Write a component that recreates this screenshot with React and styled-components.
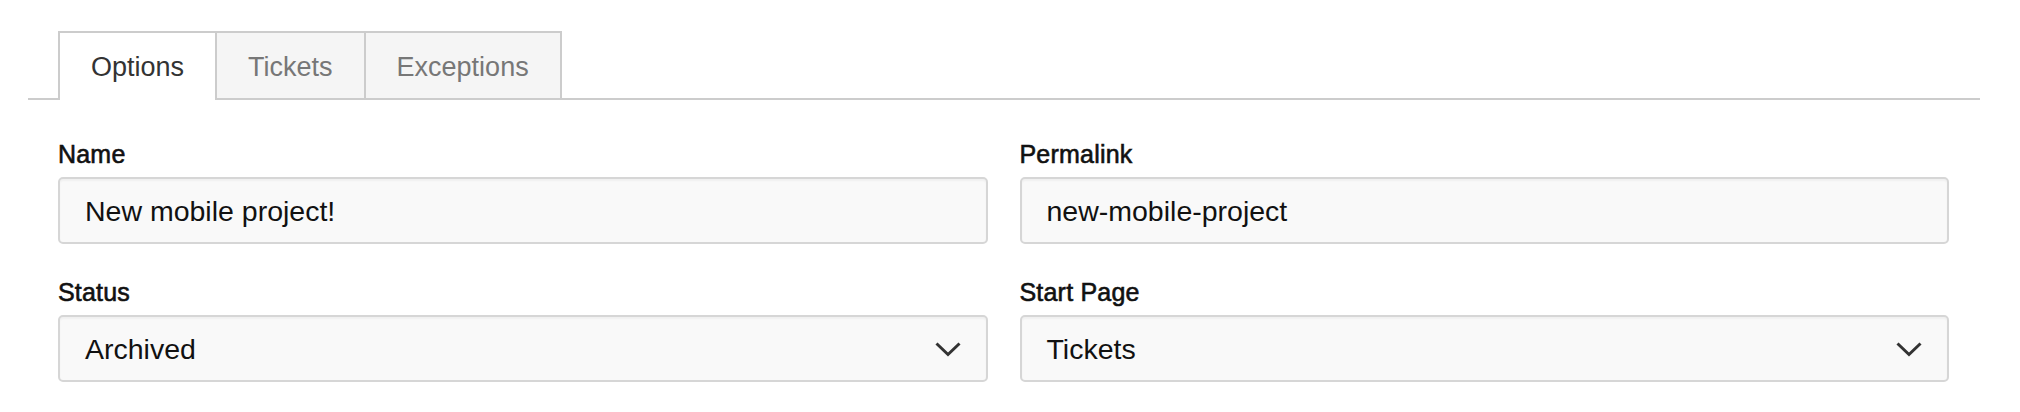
import React from "react";
import styled, { createGlobalStyle } from "styled-components";

const Global = createGlobalStyle`
  html, body {
    margin: 0;
    padding: 0;
    background: #ffffff;
    font-family: "Liberation Sans", Arial, Helvetica, sans-serif;
  }
`;

const Page = styled.div`
  width: 1952px;
  padding: 31px 0 0 28px;
`;

const TabList = styled.div`
  display: flex;
  align-items: flex-end;
  padding-left: 30px;
  border-bottom: 2px solid #cccccc;
  height: 67px;
`;

const Tab = styled.div`
  box-sizing: border-box;
  display: flex;
  align-items: center;
  height: ${(p) => (p.$active ? "69px" : "67px")};
  margin-bottom: ${(p) => (p.$active ? "-2px" : "0")};
  padding: ${(p) => (p.$active ? "4px 31px 2px" : "4px 31px 0")};
  margin-right: -2px;
  border: 2px solid #cccccc;
  border-bottom: 0;
  background: ${(p) => (p.$active ? "#ffffff" : "#f5f5f5")};
  color: ${(p) => (p.$active ? "#333333" : "#777777")};
  font-size: 27px;
  position: relative;
  z-index: ${(p) => (p.$active ? 1 : 0)};
`;

const Form = styled.div`
  display: grid;
  grid-template-columns: 1fr 1fr;
  column-gap: 32px;
  row-gap: 34px;
  padding: 40px 31px 0 30px;
`;

const Field = styled.div`
  display: flex;
  flex-direction: column;
  gap: 8px;
`;

const Label = styled.label`
  font-size: 25px;
  line-height: 28.8px;
  font-weight: 400;
  letter-spacing: 0.2px;
  -webkit-text-stroke: 0.6px #111111;
  color: #111111;
`;

const Control = styled.div`
  box-sizing: border-box;
  height: 67px;
  display: flex;
  align-items: center;
  justify-content: space-between;
  padding: 2px 25px 0;
  background: #f9f9f9;
  border: 2px solid #d6d6d6;
  border-radius: 5px;
  box-shadow: inset 0 2px 2px rgba(0, 0, 0, 0.04);
  font-size: 28.5px;
  color: #111111;
`;

const Chevron = () => (
  <svg width="26" height="15" viewBox="0 0 26 15" fill="none">
    <path d="M1.5 1.5 L13 12.5 L24.5 1.5" stroke="#333333" strokeWidth="3" strokeLinecap="butt" strokeLinejoin="miter" />
  </svg>
);

export default function App() {
  return (
    <Page>
      <Global />
      <TabList>
        <Tab $active>Options</Tab>
        <Tab>Tickets</Tab>
        <Tab>Exceptions</Tab>
      </TabList>
      <Form>
        <Field>
          <Label>Name</Label>
          <Control>New mobile project!</Control>
        </Field>
        <Field>
          <Label>Permalink</Label>
          <Control>new-mobile-project</Control>
        </Field>
        <Field>
          <Label>Status</Label>
          <Control>
            <span>Archived</span>
            <Chevron />
          </Control>
        </Field>
        <Field>
          <Label>Start Page</Label>
          <Control>
            <span>Tickets</span>
            <Chevron />
          </Control>
        </Field>
      </Form>
    </Page>
  );
}
